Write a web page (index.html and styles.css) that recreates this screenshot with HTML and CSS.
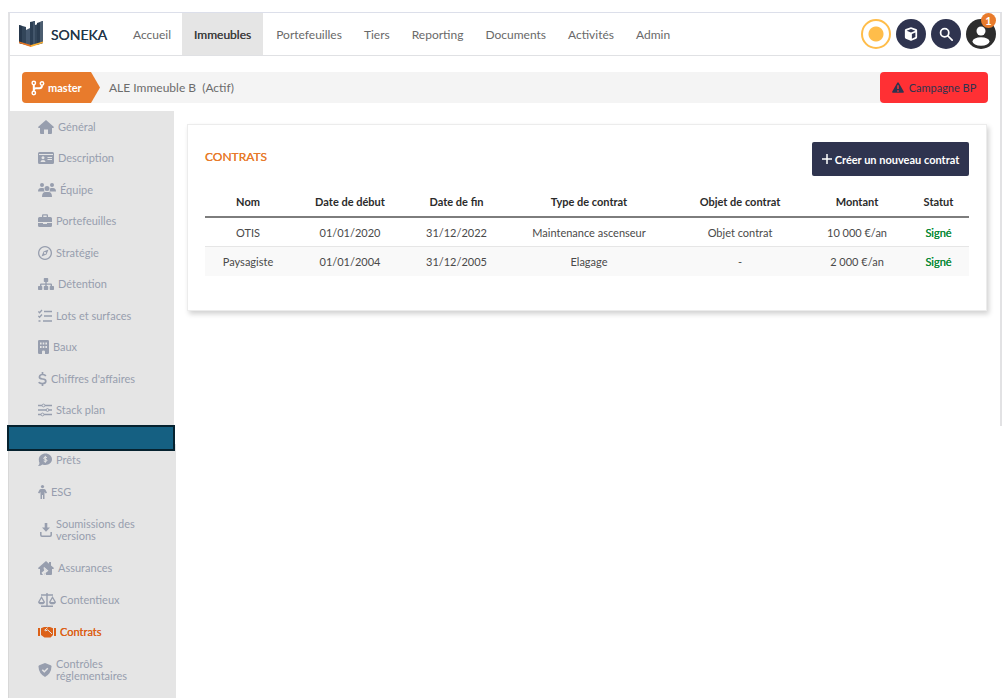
FILE: index.html
```html
<!DOCTYPE html>
<html lang="fr">
<head>
    <meta charset="UTF-8">
    <meta name="viewport" content="width=device-width, initial-scale=1.0">
    <title>Soneka - Contrats</title>
    <link rel="stylesheet" href="styles.css">
</head>
<body>

    <div class="app">
        <header class="topbar">
            <a class="brand" href="#">
                <svg class="logo" viewBox="0 0 24 26" width="24" height="26">
                    <path d="M0 4l7 2v18l-7-2z" fill="#33465a"/>
                    <path d="M0 4l3 1v18l-3-1z" fill="#26374b"/>
                    <path d="M7 9l4-2v18l-4-1z" fill="#46596f"/>
                    <path d="M11 1l5-1v24l-4 1-1-.300z" fill="#2c3f54"/>
                    <path d="M14 .400l2-.400v24l-2 .500z" fill="#43566b"/>
                    <path d="M16 4l3-1v20l-3 1z" fill="#33465a"/>
                    <path d="M18 2l6-2v22l-6 2z" fill="#2b3d51"/>
                    <path d="M21 1l3-1v22l-3 1z" fill="#4b5d70"/>
                    <path d="M0 20.500l12 3.500v2L0 22z" fill="#e87722"/>
                    <path d="M12 24l12-3.500V22l-12 4z" fill="#fbb034"/>
                </svg>
                <span>SONEKA</span>
            </a>
            <nav class="menu">
                <a href="#">Accueil</a>
                <a href="#" class="active">Immeubles</a>
                <a href="#">Portefeuilles</a>
                <a href="#">Tiers</a>
                <a href="#">Reporting</a>
                <a href="#">Documents</a>
                <a href="#">Activités</a>
                <a href="#">Admin</a>
            </nav>
            <div class="tools">
                <button class="round sun" aria-label="Statut"></button>
                <button class="round" aria-label="Modules">
                    <svg viewBox="0 0 16 16" width="14" height="14"><path fill="#fff" fill-rule="evenodd" d="M7 .6q1-.4 2 0l5 1.7q1 .4 1 1.5v8q0 1-1 1.500l-5 2.200q-1 .4-2 0l-5-2.200q-1-.5-1-1.500v-8q0-1.100 1-1.500zM8 2.400L3 4.200l5 2 5-2zM9 8v5.300l4-1.800V6.300z"/></svg>
                </button>
                <button class="round" aria-label="Rechercher">
                    <svg viewBox="0 0 16 16" width="14" height="14" fill="none" stroke="#fff" stroke-width="2" stroke-linecap="round"><circle cx="6.500" cy="6.500" r="4.700"/><path d="M10 10l5 5"/></svg>
                </button>
                <button class="round user" aria-label="Mon compte">
                    <svg viewBox="0 0 30 30" width="30" height="30"><circle cx="15" cy="12" r="4.500" fill="#fff"/><ellipse cx="15" cy="22.500" rx="8.500" ry="4.200" fill="#fff"/></svg>
                    <span class="badge">1</span>
                </button>
            </div>
        </header>

        <div class="crumb">
            <span class="branch">
                <svg viewBox="0 0 14 16" width="14" height="16" fill="none" stroke="#fff" stroke-width="1.500"><circle cx="2.800" cy="3" r="1.700"/><circle cx="11" cy="3.500" r="1.700"/><circle cx="2.800" cy="13" r="1.700"/><path stroke-width="2" d="M2.800 5v6M11 5.500q0 2.700-2.500 2.700H5Q3 8.200 2.800 10"/></svg>
                master
            </span>
            <span class="crumb-title">ALE Immeuble B&nbsp; (Actif)</span>
            <button class="campaign">
                <svg viewBox="0 0 16 14" width="12" height="11"><path fill="#2f344f" fill-rule="evenodd" d="M7 .6q1-1 2 0l6.800 12q.3 1.400-1 1.400H1.200q-1.300 0-1-1.400zM7 4v5h2V4zM7 10.500v2h2v-2z"/></svg>
                Campagne BP
            </button>
        </div>

        <div class="columns">
            <aside class="sidebar">
                <a href="#"><svg viewBox="0 0 16 14" width="16" height="14"><path d="M8 0l7.700 6.700q.5.900-.6 1.300H14v5q0 1-1 1h-3V9.500H6V14H3q-1 0-1-1V8H.9Q-.2 7.600.3 6.700z"/></svg>Général</a>
                <a href="#"><svg viewBox="0 0 16 14" width="16" height="14"><path fill-rule="evenodd" d="M1.500 1h13Q16 1 16 2.500v9q0 1.500-1.500 1.500h-13Q0 13 0 11.500v-9Q0 1 1.500 1zM1 3v1h14V3zM5 5.200a1.500 1.500 0 1 0 .01 0zM2.500 11h5Q7.500 9 5 9T2.500 11zM9.500 6v1H14V6zM9.500 8v1H14V8z"/></svg>Description</a>
                <a href="#"><svg viewBox="0 0 18 14" width="18" height="14"><circle cx="4" cy="2" r="2"/><circle cx="14" cy="2" r="2"/><circle cx="9" cy="5.500" r="2.500"/><path d="M0 8.500Q0 5 3 5h2q.7 0 1 .4Q5.600 7 6.700 8.500zM18 8.500Q18 5 15 5h-2q-.7 0-1 .4.400 1.600-.7 3.100zM4 14q0-5 3.500-5h3Q14 9 14 14z"/></svg>Équipe</a>
                <a href="#"><svg viewBox="0 0 14 14" width="14" height="14"><path fill-rule="evenodd" d="M4 3V1.500Q4 .3 5 .3h4q1 0 1 1.200V3h2.500Q14 3 14 4.500V8H0V4.500Q0 3 1.500 3zM5.300 3h3.400V1.600H5.300zM0 9h5v1h4V9h5v2.500q0 1.500-1.500 1.500h-11Q0 13 0 11.500z"/></svg>Portefeuilles</a>
                <a href="#"><svg viewBox="0 0 14 14" width="14" height="14"><path fill-rule="evenodd" d="M7 0a7 7 0 1 0 .01 0zM7 1.300a5.700 5.700 0 1 1-.01 0zM10.500 3.500L5.500 5.500l-2 5 5-2zM7 6a1 1 0 1 1-.01 0z"/></svg>Stratégie</a>
                <a href="#"><svg viewBox="0 0 16 14" width="16" height="14"><path d="M6.500 1h3q.7 0 .7.700v2.600q0 .7-.7.700h-.8v1.400H13q1 0 1 1V9h1.300q.7 0 .7.700v2.600q0 .7-.7.700h-2.900q-.7 0-.7-.7V9.700q0-.7.700-.7h.2V7.700H8.700V9h.800q.7 0 .7.700v2.600q0 .7-.7.700h-3q-.7 0-.7-.7V9.700q0-.7.700-.7h.800V7.700H3.400V9h.200q.7 0 .7.700v2.600q0 .7-.7.700H.7q-.7 0-.7-.7V9.700Q0 9 .7 9H2V7.400q0-1 1-1h4.300V5h-.8q-.7 0-.7-.7V1.700q0-.7.700-.7z"/></svg>Détention</a>
                <a href="#"><svg viewBox="0 0 14 14" width="14" height="14" class="line"><path stroke-width="1.600" d="M6 2.500h8M6 7h8M5 12h9"/><path stroke-width="1.300" d="M.3 2.500l1.200 1.200L4 1M.3 7l1.200 1.200L4 5.500M.5 12h2"/></svg>Lots et surfaces</a>
                <a href="#"><svg viewBox="0 0 11 14" width="11" height="14"><path fill-rule="evenodd" d="M1.200 0h8.600Q11 0 11 1.200v11.600Q11 14 9.800 14H7v-2.500q0-1-1.500-1T4 11.500V14H1.200Q0 14 0 12.800V1.200Q0 0 1.200 0zM2 2.500v2h1.600v-2zM4.700 2.500v2h1.600v-2zM7.400 2.500v2H9v-2zM2 6v2h1.600V6zM4.700 6v2h1.600V6zM7.400 6v2H9V6z"/></svg>Baux</a>
                <a href="#"><svg viewBox="0 0 9 14" width="9" height="14" class="line"><path stroke-width="1.700" d="M4.500 0v3M4.500 11v3M7.800 4Q7 2.500 4.500 2.500T1.500 4.600 4.500 7t3.300 2.400T4.500 11.500 1 10"/></svg>Chiffres d'affaires</a>
                <a href="#"><svg viewBox="0 0 14 14" width="14" height="14" class="line"><path stroke-width="1.500" d="M0 2.500h4M7 2.500h7M0 7h8M11 7h3M0 11.500h3M6 11.500h8"/><circle cx="5.500" cy="2.500" r="1.400"/><circle cx="9.500" cy="7" r="1.400"/><circle cx="4.500" cy="11.500" r="1.400"/></svg>Stack plan</a>
            </aside>

            <main class="content">
                <section class="card">
                    <div class="card-head">
                        <h1>CONTRATS</h1>
                        <button class="create">
                            <svg viewBox="0 0 10 10" width="10" height="10"><path d="M5 0v10M0 5h10" stroke="#fff" stroke-width="1.500"/></svg>
                            Créer un nouveau contrat
                        </button>
                    </div>
                    <table class="contracts">
                        <colgroup>
                            <col class="col-name"><col class="col-start"><col class="col-end"><col class="col-type"><col class="col-object"><col class="col-amount"><col class="col-status">
                        </colgroup>
                        <thead>
                            <tr>
                                <th>Nom</th>
                                <th>Date de début</th>
                                <th>Date de fin</th>
                                <th>Type de contrat</th>
                                <th>Objet de contrat</th>
                                <th>Montant</th>
                                <th>Statut</th>
                            </tr>
                        </thead>
                        <tbody>
                            <tr>
                                <td>OTIS</td>
                                <td>01/01/2020</td>
                                <td>31/12/2022</td>
                                <td>Maintenance ascenseur</td>
                                <td>Objet contrat</td>
                                <td>10&#8239;000 €/an</td>
                                <td class="signed">Signé</td>
                            </tr>
                            <tr>
                                <td>Paysagiste</td>
                                <td>01/01/2004</td>
                                <td>31/12/2005</td>
                                <td>Elagage</td>
                                <td>-</td>
                                <td>2&#8239;000 €/an</td>
                                <td class="signed">Signé</td>
                            </tr>
                        </tbody>
                    </table>
                </section>
            </main>
        </div>
    </div>

    <div class="band"></div>

    <aside class="sidebar sidebar-more">
        <a href="#"><svg viewBox="0 0 14 14" width="14" height="14"><path d="M7.500.5C11 .5 14 3 14 6.300s-3 5.700-6.500 5.700q-1.700 0-3-.6Q2.500 13 0 13q1.500-1.500 1.500-3Q.8 8.500.8 6.500C.8 3 4 .5 7.500.5z"/><path d="M7.300 2.800v7M9 4.600Q7.300 3.500 6 4.600T7.300 6.300 8.800 8 5.700 8" fill="none" stroke="#e5e5e5"/></svg>Prêts</a>
        <a href="#"><svg viewBox="0 0 9 14" width="9" height="14"><circle cx="4.500" cy="1.600" r="1.600"/><path d="M3 4h3q1 0 1.500.8L9 7.800l-1.300.8L6.500 7v7H5v-4H4v4H2.500V7L1.300 8.600 0 7.800l1.500-3Q2 4 3 4z"/></svg>ESG</a>
        <a href="#" class="tall"><svg class="inset" viewBox="0 0 12 14" width="12" height="14"><path d="M4.700 0h2.600v4.500H10L6 8.700 2 4.500h2.700z"/><path d="M.8 9v3q0 1.200 1.200 1.200h8q1.200 0 1.200-1.200V9" fill="none" stroke="currentColor" stroke-width="1.500"/></svg>Soumissions des<br>versions</a>
        <a href="#"><svg viewBox="0 0 16 14" width="16" height="14"><path d="M8 0l3 2.700V1h2v3.500l2.700 2.200q.5.900-.6 1.300H14v5q0 1-1 1H7l-.8-1.600L9 10 5.500 7.200l.7 2.300-2.700 2.300L5 14H3q-1 0-1-1V8H.9Q-.2 7.600.3 6.700z"/><path d="M5.800 6.500l3.700 3.300-2.700 2 .8 2.200" fill="none" stroke="#e5e5e5" stroke-width="1.200"/></svg>Assurances</a>
        <a href="#"><svg viewBox="0 0 18 14" width="18" height="14"><path fill-rule="evenodd" d="M8.300 0h1.400v1.300H15v1.400H9.700v9.800H15V14H3v-1.500h5.300V2.700H3V1.300h5.300zM3.500 3L7 9q-.4 2.300-3.500 2.300T0 9zM3.500 5.400L1.500 9h4zM14.500 3L18 9q-.4 2.300-3.500 2.300T11 9zM14.500 5.400L12.500 9h4z"/></svg>Contentieux</a>
        <a href="#" class="current"><svg viewBox="0 0 18 14" width="18" height="14"><path d="M0 3h2v8H0zM16 3h2v8h-2zM3 3.300l3-1.300h6l3 1.300V10l-2.500 2.500H6.500L3 10z"/><path d="M9.500 2.700L6.700 5.200q.8 1.500 3-.3l4.300 4" fill="none" stroke="#e5e5e5"/></svg>Contrats</a>
        <a href="#" class="tall"><svg viewBox="0 0 14 14" width="14" height="14"><path d="M7 0l5.700 2.300q.8.400.8 1.200Q13.300 10.500 7 14 .7 10.500.5 3.500q0-.8.800-1.200z"/><path d="M4.300 6.700l2 2 3.500-3.500" fill="none" stroke="#e5e5e5" stroke-width="1.500"/></svg>Contrôles<br>réglementaires</a>
    </aside>

</body>
</html>
```
FILE: styles.css
```css
* {
    box-sizing: border-box;
}
body {
    display: flex;
    flex-direction: column;
    min-height: 100vh;
    margin: 0;
    padding: 12px 0 0 8px;
    background: #fff;
    font-family: Lato, "Open Sans", sans-serif;
    font-size: 11px;
    color: #4a4a4a;
}
a {
    color: inherit;
    text-decoration: none;
}
button {
    border: none;
    font-family: inherit;
    font-size: inherit;
    cursor: pointer;
}

/* Top bar */
.app {
    border: 2px solid #e2e2e4;
    border-top: 1px solid #dcdfea;
    border-bottom: none;
}
.topbar {
    display: flex;
    align-items: stretch;
    height: 43px;
    padding-right: 4px;
    border-bottom: 1px solid #e0e1e4;
}
.brand {
    display: flex;
    align-items: center;
    gap: 8px;
    width: 112px;
    padding-left: 9px;
    font-size: 14px;
    color: #26374b;
    text-shadow: 0 0 0 #26374b;
}
.menu {
    display: flex;
    flex: 1;
    font-size: 12px;
    color: #696969;
}
.menu a {
    display: flex;
    align-items: center;
    padding: 0 11px;
}
.menu .active {
    margin-right: 2px;
    padding: 0 12px;
    background: #e5e5e5;
    color: #3f3f3f;
    text-shadow: 0 0 0 #3f3f3f;
}
.tools {
    display: flex;
    align-items: center;
    gap: 5px;
}
.round {
    position: relative;
    display: flex;
    align-items: center;
    justify-content: center;
    width: 30px;
    height: 30px;
    padding: 0;
    border-radius: 50%;
    background: #2f344f;
}
.sun {
    border: 2px solid #ffbd4a;
    background: radial-gradient(circle, #ffbd4a 7px, #fff 8px);
}
.user {
    background: #2d2d2d;
}
.badge {
    position: absolute;
    top: -6px;
    right: 0;
    width: 15px;
    height: 15px;
    border-radius: 50%;
    background: #e87b2c;
    color: #fff;
    font-size: 11px;
    font-weight: bold;
    line-height: 15px;
    text-align: center;
}

/* Breadcrumb */
.crumb {
    display: flex;
    align-items: stretch;
    height: 31px;
    margin: 16px 12px 8px;
    border-radius: 4px;
    background: #f4f4f4;
}
.branch {
    display: flex;
    align-items: center;
    gap: 3px;
    width: 78px;
    padding-left: 9px;
    border-radius: 4px 0 0 4px;
    background: #e87b2c;
    color: #fff;
    font-size: 11px;
    font-weight: bold;
    clip-path: polygon(0 0, 69px 0, 100% 50%, 69px 100%, 0 100%);
}
.crumb-title {
    flex: 1;
    align-self: center;
    padding-left: 9px;
    font-size: 12px;
    color: #6c6c6c;
}
.campaign {
    display: flex;
    align-items: center;
    justify-content: center;
    gap: 5px;
    width: 108px;
    padding: 0;
    border-radius: 4px;
    background: #ff3034;
    color: #2f344f;
}

/* Sidebar */
.columns {
    display: flex;
}
.sidebar {
    display: grid;
    grid-auto-rows: 1fr;
    width: 164px;
    min-height: 315px;
    padding-left: 28px;
    background: #e5e5e5;
    color: #979eae;
    line-height: 12px;
}
.sidebar a {
    display: flex;
    align-items: center;
    gap: 4px;
}
.sidebar svg {
    flex: none;
    fill: currentColor;
}
.sidebar .line {
    fill: none;
    stroke: currentColor;
}
.sidebar .inset {
    margin-left: 2px;
}
.sidebar .current {
    color: #dc6118;
    text-shadow: 0 0 0 #dc6118;
}
.band {
    position: relative;
    z-index: 1;
    width: 168px;
    height: 26px;
    margin: -1px 0 0 -1px;
    border: 2px solid #06222f;
    background: #156082;
}
.sidebar-more {
    display: block;
    flex: 1;
    width: 168px;
    min-height: 0;
    margin-top: -7px;
    padding-left: 29px;
    border-left: 1px solid #d8d8d8;
}
.sidebar-more a {
    height: 32px;
}
.sidebar-more .tall {
    height: 44px;
}

/* Contracts */
.content {
    flex: 1;
    padding: 13px;
}
.card {
    padding: 17px 17px 34px;
    border: 1px solid #ececec;
    box-shadow: 2px 3px 5px rgba(0, 0, 0, 0.18);
}
.card-head {
    display: flex;
    justify-content: space-between;
    margin-bottom: 10px;
}
h1 {
    margin: 7px 0 0;
    font-size: 12px;
    font-weight: normal;
    line-height: 16px;
    color: #e87b2c;
    text-shadow: 0 0 0 #e87b2c;
}
.create {
    display: flex;
    align-items: center;
    justify-content: center;
    gap: 3px;
    width: 157px;
    height: 34px;
    padding: 0;
    border-radius: 2px;
    background: #2f344f;
    color: #fff;
    font-weight: bold;
}
.contracts {
    width: 100%;
    table-layout: fixed;
    border-collapse: separate;
    border-spacing: 0;
    text-align: center;
}
.contracts th {
    height: 32px;
    padding: 0;
    border-bottom: 2px solid #7d7d7d;
    color: #2b2b2b;
}
.contracts td {
    height: 29px;
    padding: 0;
}
.contracts tr:first-child td {
    border-bottom: 1px solid #e6e6e6;
}
.contracts tr:nth-child(2) td {
    background: #f9f9f9;
}
.contracts .signed {
    color: #0c8a36;
    text-shadow: 0 0 0 #0c8a36;
}
.col-name {
    width: 86px;
}
.col-start {
    width: 118px;
}
.col-end {
    width: 95px;
}
.col-type {
    width: 170px;
}
.col-object {
    width: 132px;
}
.col-amount {
    width: 102px;
}
.col-status {
    width: 61px;
}
```
